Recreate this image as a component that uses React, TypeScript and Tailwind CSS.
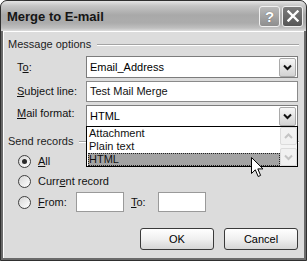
import React from 'react';

function Chevron({ muted = false }: { muted?: boolean }) {
  return (
    <svg width="9" height="7" viewBox="0 0 9 7">
      <path
        d="M1 1.5 L4.5 5 L8 1.5"
        fill="none"
        stroke={muted ? '#c4c4c4' : '#111'}
        strokeWidth="2"
      />
    </svg>
  );
}

function DropButton() {
  return (
    <div className="mr-[1px] flex h-[19px] w-[17px] items-center justify-center rounded-[2px] border border-[#a9a9a9] bg-gradient-to-b from-[#f7f7f7] to-[#d2d2d2]">
      <Chevron />
    </div>
  );
}

function ComboBox({ value, children }: { value: string; children?: React.ReactNode }) {
  return (
    <div className="relative flex h-[22px] w-[212px] items-center border border-[#7c7c7c] bg-white pl-[3px]">
      <span className="flex-1 text-black">{value}</span>
      <DropButton />
      {children}
    </div>
  );
}

function Radio({ checked = false }: { checked?: boolean }) {
  return (
    <span className="flex h-[13px] w-[13px] items-center justify-center rounded-full border border-[#3f3f3f] bg-gradient-to-br from-[#d6d6d6] to-white">
      {checked && <span className="h-[5px] w-[5px] rounded-full bg-[#2a2a2a]" />}
    </span>
  );
}

function Button({ label }: { label: string }) {
  return (
    <button className="flex h-[22px] w-[74px] items-center justify-center rounded-[3px] border border-[#3a3a3a] bg-gradient-to-b from-white via-[#f0f0f0] to-[#d6d6d6] text-black">
      {label}
    </button>
  );
}

function SectionLabel({ text }: { text: string }) {
  return (
    <div className="flex h-[13px] items-center">
      <span className="text-[#1c1c1c]">{text}</span>
      <div className="ml-[6px] flex-1 border-t border-b border-t-[#a4a4a4] border-b-white" />
    </div>
  );
}

function DropList() {
  return (
    <div className="absolute left-[-1px] top-full z-10 flex h-[41px] w-[212px] border border-black bg-white">
      <div className="flex flex-1 flex-col pl-[1px] leading-[13px]">
        <div className="h-[13px] pl-[1px]">Attachment</div>
        <div className="h-[13px] pl-[1px]">Plain text</div>
        <div className="h-[13px] border border-dotted border-[#222] bg-[#a3a3a3] leading-[11px]">HTML</div>
      </div>
      <div className="flex w-[17px] flex-col justify-between bg-[#f4f4f4]">
        <div className="flex h-[18px] items-center justify-center rounded-[2px] border border-[#dcdcdc] bg-[#f1f1f1]">
          <svg width="9" height="7" viewBox="0 0 9 7">
            <path d="M1 5 L4.5 1.5 L8 5" fill="none" stroke="#c4c4c4" strokeWidth="2" />
          </svg>
        </div>
        <div className="flex h-[18px] items-center justify-center rounded-[2px] border border-[#dcdcdc] bg-[#f1f1f1]">
          <Chevron muted />
        </div>
      </div>
    </div>
  );
}

function Cursor() {
  return (
    <svg className="absolute left-[251px] top-[157px] z-20" width="14" height="22" viewBox="0 0 14 22">
      <path
        d="M0.5 0.5 L0.5 16.5 L4.3 12.8 L7.2 19.5 L9.6 18.4 L6.8 11.9 L12 11.9 Z"
        fill="white"
        stroke="black"
        strokeWidth="1"
        strokeLinejoin="miter"
      />
    </svg>
  );
}

export default function App() {
  return (
    <div className="relative h-[261px] w-[307px] font-['Liberation_Sans','DejaVu_Sans',sans-serif] text-[11px] leading-[13px]">
      <div className="flex h-full w-full flex-col rounded-t-[7px] border border-[#2f2f2f] bg-[#6a6a6a]">
        {/* title bar */}
        <div className="flex h-[30px] items-center rounded-t-[6px] bg-[linear-gradient(to_bottom,#e4e4e4_0px,#c4c4c4_5px,#a9a9a9_14px,#acacac_22px,#bfbfbf_27px,#dcdcdc_30px)] pl-[6px] pr-[3px]">
          <span className="flex-1 text-[13px] font-bold text-[#151515]">Merge to E-mail</span>
          <div className="flex gap-[2px]">
            <div className="flex h-[21px] w-[21px] items-center justify-center rounded-[3px] border border-[#f0f0f0] bg-gradient-to-b from-[#b9b9b9] to-[#8e8e8e] text-[15px] font-bold text-white [text-shadow:0_0_1px_#555]">
              ?
            </div>
            <div className="flex h-[21px] w-[21px] items-center justify-center rounded-[3px] border border-[#f0f0f0] bg-gradient-to-b from-[#7c7c7c] to-[#575757]">
              <svg width="12" height="12" viewBox="0 0 12 12">
                <path d="M1.5 1.5 L10.5 10.5 M10.5 1.5 L1.5 10.5" stroke="white" strokeWidth="2.4" strokeLinecap="square" />
              </svg>
            </div>
          </div>
        </div>

        {/* body */}
        <div className="mx-[2px] mb-[2px] flex flex-1 flex-col border-l border-t border-l-white border-t-white bg-[#dcdcdc] pl-[4px] pr-[5px] text-[#111]">
          <div className="mt-[6px]">
            <SectionLabel text="Message options" />
          </div>

          <div className="mt-[5px] flex items-center pl-[9px]">
            <span className="w-[69px]">
              T<u className="underline-offset-1">o</u>:
            </span>
            <ComboBox value="Email_Address" />
          </div>

          <div className="mt-[3px] flex items-center pl-[9px]">
            <span className="w-[69px]">
              <u className="underline-offset-1">S</u>ubject line:
            </span>
            <div className="flex h-[21px] w-[212px] items-center border border-[#8a8a8a] bg-white pl-[3px]">Test Mail Merge</div>
          </div>

          <div className="mt-[3px] flex items-center pl-[9px]">
            <span className="w-[69px] self-start pt-[2px]">
              <u className="underline-offset-1">M</u>ail format:
            </span>
            <ComboBox value="HTML">
              <DropList />
            </ComboBox>
          </div>

          <div className="mt-[8px]">
            <SectionLabel text="Send records" />
          </div>

          <div className="mt-[6px] flex h-[15px] items-center gap-[7px] pl-[10px]">
            <Radio checked />
            <span>
              <u className="underline-offset-1">A</u>ll
            </span>
          </div>

          <div className="mt-[5px] flex h-[15px] items-center gap-[7px] pl-[10px]">
            <Radio />
            <span>
              Curr<u className="underline-offset-1">e</u>nt record
            </span>
          </div>

          <div className="mt-[3px] flex h-[20px] items-center pl-[10px]">
            <Radio />
            <span className="ml-[7px] w-[38px]">
              <u className="underline-offset-1">F</u>rom:
            </span>
            <div className="h-[20px] w-[48px] border border-[#9a9a9a] bg-white" />
            <span className="ml-[7px] w-[27px]">
              <u className="underline-offset-1">T</u>o:
            </span>
            <div className="h-[20px] w-[48px] border border-[#9a9a9a] bg-white" />
          </div>

          <div className="mt-[16px] flex justify-end gap-[10px] pr-[1px]">
            <Button label="OK" />
            <Button label="Cancel" />
          </div>
        </div>
      </div>
      <Cursor />
    </div>
  );
}
